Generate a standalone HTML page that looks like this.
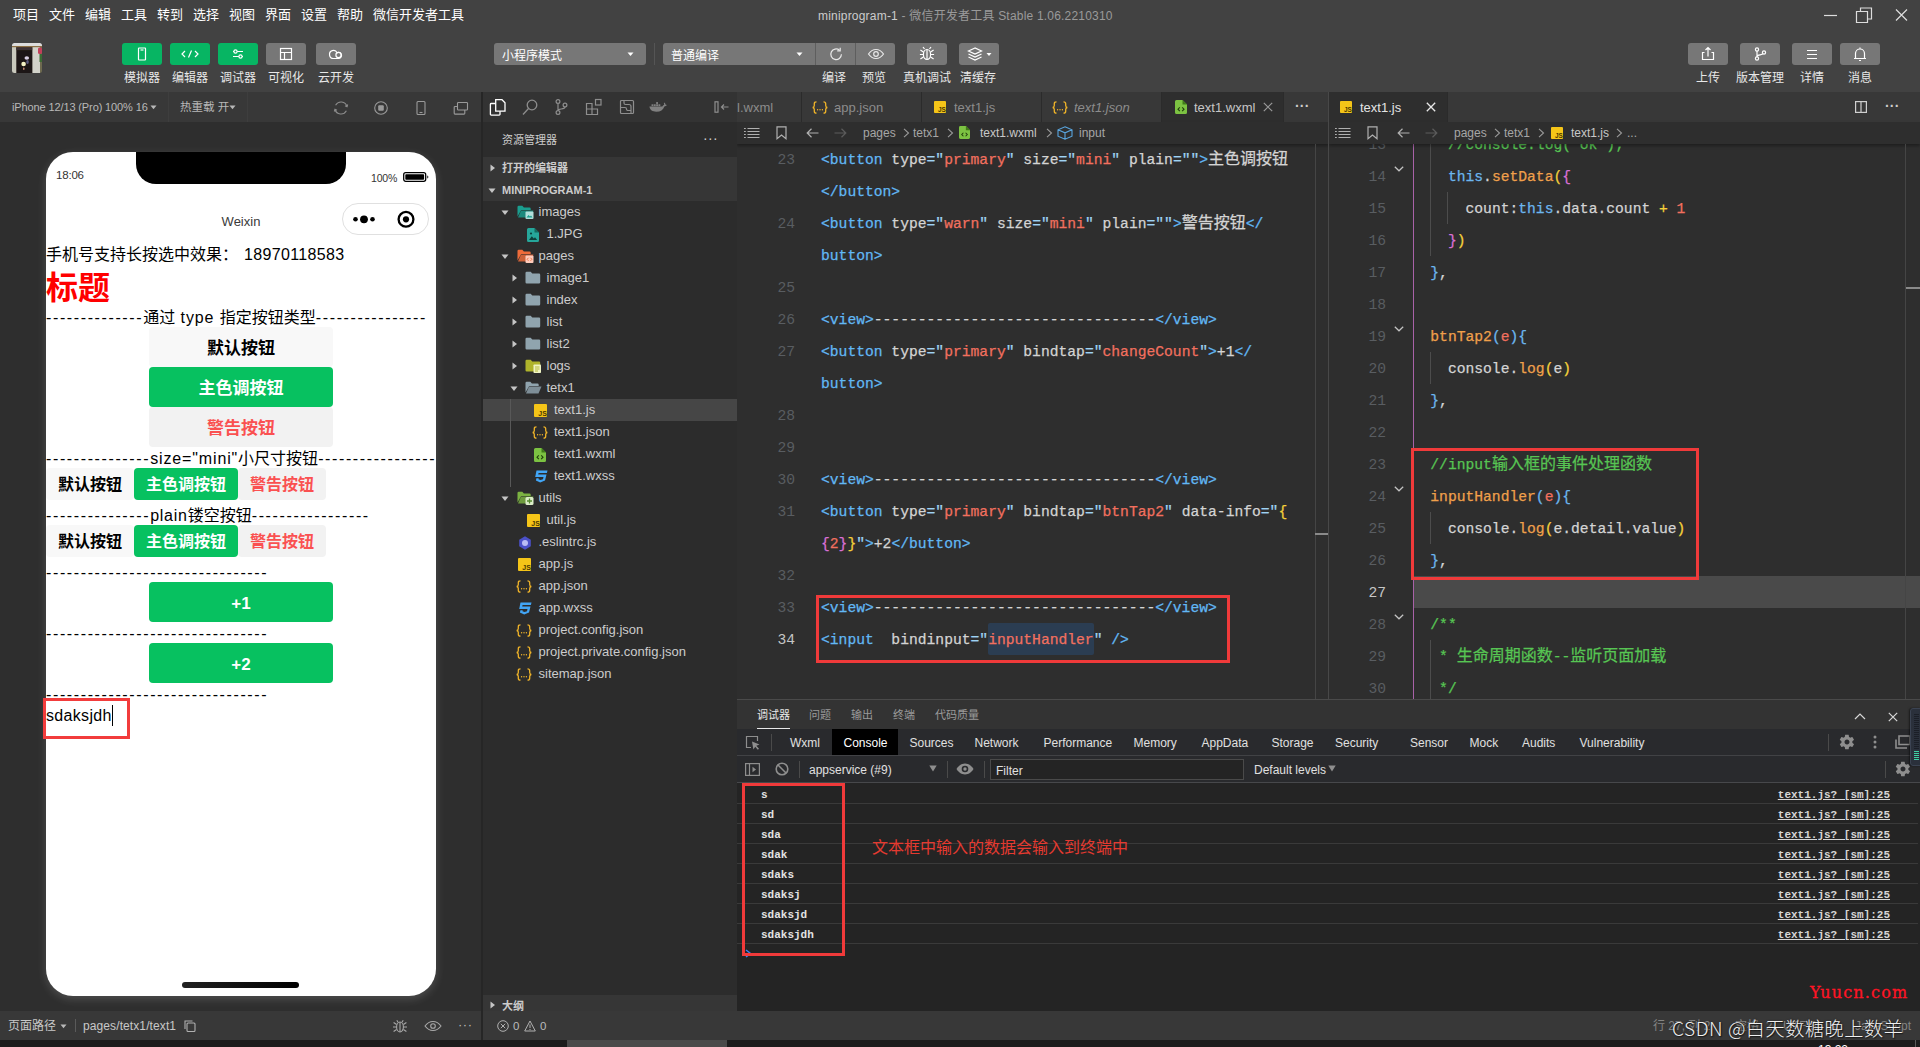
<!DOCTYPE html>
<html lang="zh-CN">
<head>
<meta charset="utf-8">
<title>miniprogram-1 - 微信开发者工具 Stable 1.06.2210310</title>
<style>
*{box-sizing:border-box;margin:0;padding:0}
html,body{width:1920px;height:1047px;overflow:hidden;background:#424242}
body{font-family:"Liberation Sans","Noto Sans CJK SC",sans-serif;font-size:12px;color:#ccc;position:relative}
.abs{position:absolute}
.t{position:absolute;white-space:nowrap;line-height:1}
svg{position:absolute;overflow:visible}
/* top */
#menubar{left:0;top:0;width:1920px;height:30px;background:#424242}
#menubar .t{top:8px;font-size:13px;color:#fff;line-height:14px}
#toolbar{left:0;top:30px;width:1920px;height:62px;background:#424242}
.tb{position:absolute;top:43px;height:22px;width:40px;border-radius:3px;background:#777}
.tb.g{background:#07b563}
.tl{position:absolute;top:72px;font-size:12px;color:#e8e8e8;line-height:13px;white-space:nowrap;transform:translateX(-50%)}
.sel{position:absolute;top:43px;height:22px;border-radius:3px;background:#777;color:#fff;font-size:12px;line-height:27px;padding-left:8px}
/* panels */
#sim{left:0;top:92px;width:481px;height:948px;background:#2e2e2e}
#simbar{left:0;top:92px;width:481px;height:30px;background:#383838}
#simfoot{left:0;top:1011px;width:481px;height:29px;background:#383838}
#side{left:483px;top:92px;width:254px;height:948px;background:#2c2c2c}
#actbar{left:483px;top:92px;width:254px;height:30px;background:#333}
#ed1{left:737px;top:92px;width:592px;height:608px;background:#2e2e2e;overflow:hidden}
#ed2{left:1329px;top:92px;width:591px;height:608px;background:#2e2e2e;overflow:hidden}
#dbg{left:737px;top:700px;width:1183px;height:311px;background:#242424;overflow:hidden}
#status{left:483px;top:1011px;width:1437px;height:29px;background:#383838}
#taskbar{left:0;top:1040px;width:1920px;height:7px;background:#1c1c1c;overflow:hidden}
.code{position:absolute;white-space:pre;margin-top:1px;-webkit-text-stroke:.25px;font-family:"Liberation Mono","Noto Sans CJK SC",monospace;font-size:14.67px;line-height:32px;height:32px;color:#d4d4d4}
.ln{position:absolute;margin-top:1px;font-family:"Liberation Mono",monospace;font-size:14.67px;line-height:32px;height:32px;color:#595d61;text-align:right;width:60px}
.tag{color:#62b8f5}.str{color:#f2705f}.att{color:#d4d4d4}.fn{color:#f0a04b}.cm{color:#57c553}.kw{color:#6cb6ef}.y{color:#f5d13a}.p{color:#da70d6}.b{color:#6cb6ef}.num{color:#f2705f}

/* phone */
#phone{left:46px;top:152px;width:390px;height:844px;background:#fff;border-radius:27px;overflow:hidden;color:#000;box-shadow:0 3px 10px rgba(255,255,255,.16)}
#phone .r{position:absolute;left:0;white-space:nowrap;font-size:16px;line-height:21px;height:21px;color:#000}
#phone .d{letter-spacing:1.615px}
.wb{position:absolute;left:103px;width:184px;height:40px;border-radius:4px;font-size:17px;font-weight:700;line-height:43px;text-align:center;background:#f2f2f2;color:#000}
.wm{position:absolute;height:32px;border-radius:4px;font-size:16px;font-weight:700;line-height:34px;text-align:center;background:#f2f2f2;color:#000}
.pri{background:#07c160;color:#fff}.warn{color:#fa5151}
.st{position:absolute;white-space:nowrap;color:#b8b8b8;font-size:11.5px;line-height:12px}

/* sidebar */
.tr{position:absolute;left:0;width:254px;height:22px}
.tr .n{position:absolute;top:0;font-size:13px;line-height:22px;color:#ccc;white-space:nowrap}
.hd{position:absolute;left:0;width:254px;height:22px;background:#363636}
.hd .n{position:absolute;left:19px;top:0;font-size:11px;font-weight:700;line-height:22px;color:#ccc;white-space:nowrap}

/* editors */
.tabbar{position:absolute;left:0;top:0;width:100%;height:30px;background:#383838}
.tab{position:absolute;top:0;height:30px;border-right:1px solid #2b2b2b;font-size:13px;line-height:31px;color:#8c8c8c;white-space:nowrap}
.tab.act{background:#2e2e2e;color:#e4e4e4}
.tab .n{position:absolute;top:0}
.bc{position:absolute;left:0;top:30px;width:100%;height:22px;background:#2e2e2e;box-shadow:0 2px 3px rgba(0,0,0,.35)}
.bc .n{position:absolute;top:0;font-size:12px;line-height:22px;color:#a6a6a6;white-space:nowrap}
.cj{font-size:16px}

/* debugger */
#dbg .n{position:absolute;white-space:nowrap}
.crow{position:absolute;left:0;width:1181px;height:20px;border-bottom:1px solid #3a3a3a;font-family:"Liberation Mono",monospace;font-size:11px;font-weight:700;line-height:20px;color:#e3e3e3}
.crow .m{position:absolute;left:24px;top:1px}
.crow .s{position:absolute;right:28px;top:1px;text-decoration:underline;color:#d6d6d6}
.q{color:#9fd3f2}
</style>
</head>
<body>
<div id="menubar" class="abs"><span class="t" style="left:13px">项目</span><span class="t" style="left:49px">文件</span><span class="t" style="left:85px">编辑</span><span class="t" style="left:121px">工具</span><span class="t" style="left:157px">转到</span><span class="t" style="left:193px">选择</span><span class="t" style="left:229px">视图</span><span class="t" style="left:265px">界面</span><span class="t" style="left:301px">设置</span><span class="t" style="left:337px">帮助</span><span class="t" style="left:373px">微信开发者工具</span><span class="t" style="left:818px;top:9px;font-size:12px;letter-spacing:.2px;color:#ccc">miniprogram-1<span style="color:#9a9a9a"> - 微信开发者工具 Stable 1.06.2210310</span></span><svg width="100" height="30" style="left:1820px;top:0" viewBox="0 0 100 30" fill="none" stroke="#ddd" stroke-width="1.2">
<path d="M4 15.5H17"/>
<path d="M36.500 11.500h11v11h-11z M40.500 11.500v-3.500h11v11h-4"/>
<path d="M76 9.5l11 11M87 9.5l-11 11"/></svg></div>
<div id="toolbar" class="abs"><svg width="30" height="30" style="left:12px;top:13px" viewBox="0 0 30 30"><defs><clipPath id="av"><rect width="30" height="30" rx="2.500"/></clipPath><filter id="bl"><feGaussianBlur stdDeviation=".55"/></filter></defs><g clip-path="url(#av)"><g filter="url(#bl)"><rect width="30" height="30" fill="#c9c9bd"/><rect x="4.300" y="4" width="16.300" height="27" fill="#1d1412"/><rect x="4.300" y="4.200" width="16.300" height="3" fill="#3c3236"/><rect x="20.600" y="3" width="7.500" height="28" fill="#d2d2ca"/><rect x="28" y="3" width="3" height="28" fill="#6e6a50"/><rect x="-1" y="-1" width="32" height="4" fill="#dcdcdc"/><rect x="-1" y="3" width="32" height="1.200" fill="#8c7044"/><rect x="26" y="4.500" width="4" height="6.500" rx="1.500" fill="#c2405a"/><rect x="27.500" y="11" width="3" height="8" fill="#3c6a34"/><ellipse cx="14.800" cy="15" rx="2.300" ry="1.800" fill="#d8d0e4"/><ellipse cx="11.600" cy="21" rx="2.300" ry="2.200" fill="#f4f2c4"/><ellipse cx="15.500" cy="19" rx="1.300" ry="2" fill="#5a5a80"/><ellipse cx="11.800" cy="25.800" rx=".8" ry="1.200" fill="#c8907c"/></g></g></svg><div class="tb g" style="left:122px;top:13px"><svg width="40" height="22" viewBox="0 0 40 22" fill="none" stroke="#fff" stroke-width="1.2"><rect x="16.5" y="5" width="7" height="12" rx="0.5"/><path d="M18.5 7h3"/></svg></div><div class="tb g" style="left:170px;top:13px"><svg width="40" height="22" viewBox="0 0 40 22" fill="none" stroke="#fff" stroke-width="1.2"><path d="M15 8l-3 3 3 3M25 8l3 3-3 3M21.5 7.5l-3 7"/></svg></div><div class="tb g" style="left:218px;top:13px"><svg width="40" height="22" viewBox="0 0 40 22" fill="none" stroke="#fff" stroke-width="1.2"><path d="M15 8.5h10M15 13.5h10"/><circle cx="17.5" cy="8.5" r="1.6" fill="#07b563"/><circle cx="22.5" cy="13.5" r="1.6" fill="#07b563"/></svg></div><div class="tb" style="left:266px;top:13px"><svg width="40" height="22" viewBox="0 0 40 22" fill="none" stroke="#fff" stroke-width="1.2"><rect x="14.5" y="5.5" width="11" height="11"/><path d="M14.5 9.5h11M18.5 9.5v7"/></svg></div><div class="tb" style="left:316px;top:13px"><svg width="40" height="22" viewBox="0 0 40 22" fill="none" stroke="#fff" stroke-width="1.2"><path d="M17.5 15.5a4 4 0 1 1 3.6-5.8a3 3 0 1 1 1.9 5.6z"/><circle cx="22.5" cy="12" r="2.6"/></svg></div><span class="tl" style="left:142px;top:42px">模拟器</span><span class="tl" style="left:190px;top:42px">编辑器</span><span class="tl" style="left:238px;top:42px">调试器</span><span class="tl" style="left:286px;top:42px">可视化</span><span class="tl" style="left:336px;top:42px">云开发</span><div class="sel" style="left:494px;top:13px;width:152px">小程序模式<svg width="8" height="5" style="left:133px;top:9px" viewBox="0 0 8 5"><path d="M0.5 0.5h6l-3 3.5z" fill="#fff"/></svg></div><div class="abs" style="left:654px;top:13px;width:1px;height:22px;background:#555"></div><div class="sel" style="left:663px;top:13px;width:232px">普通编译<svg width="8" height="5" style="left:133px;top:9px" viewBox="0 0 8 5"><path d="M0.5 0.5h6l-3 3.5z" fill="#fff"/></svg><div class="abs" style="left:152px;top:0;width:1px;height:22px;background:#5e5e5e"></div><div class="abs" style="left:192px;top:0;width:1px;height:22px;background:#5e5e5e"></div><svg width="40" height="22" style="left:153px;top:0" viewBox="0 0 40 22" fill="none" stroke="#e8e8e8" stroke-width="1.2"><path d="M23.5 7.2a5.3 5.3 0 1 0 1.9 4.1"/><path d="M24.2 4.8v3h-3" /></svg><svg width="40" height="22" style="left:193px;top:0" viewBox="0 0 40 22" fill="none" stroke="#e8e8e8" stroke-width="1.2"><path d="M12.5 11c2-3 4.5-4.5 7.5-4.5s5.500 1.500 7.500 4.500c-2 3-4.500 4.500-7.500 4.500s-5.500-1.500-7.500-4.500z"/><circle cx="20" cy="11" r="2.300"/></svg></div><div class="tb" style="left:907px;top:13px"><svg width="40" height="22" viewBox="0 0 40 22" fill="none" stroke="#fff" stroke-width="1.2"><ellipse cx="20" cy="11.5" rx="3.6" ry="5"/><path d="M20 6.5v10M16.400 9l-3-2M16.400 11.500h-3.500M16.400 14l-3 2M23.600 9l3-2M23.600 11.500h3.500M23.600 14l3 2M17.500 6l-1.500-2M22.500 6l1.500-2"/></svg></div><div class="tb" style="left:959px;top:13px"><svg width="40" height="22" viewBox="0 0 40 22" fill="none" stroke="#fff" stroke-width="1.200"><path d="M15 6.500l-6.500 3 6.500 3 6.500-3zM8.500 12.500l6.500 3 6.500-3M8.500 15.500l6.500 3 6.500-3" transform="translate(1,-1.500)"/><path d="M27.500 10h5l-2.500 3z" fill="#fff" stroke="none"/></svg></div><span class="tl" style="left:834px;top:42px">编译</span><span class="tl" style="left:874px;top:42px">预览</span><span class="tl" style="left:927px;top:42px">真机调试</span><span class="tl" style="left:978px;top:42px">清缓存</span><span class="tl" style="left:1708px;top:42px">上传</span><span class="tl" style="left:1760px;top:42px">版本管理</span><span class="tl" style="left:1812px;top:42px">详情</span><span class="tl" style="left:1860px;top:42px">消息</span><div class="tb" style="left:1688px;top:13px"><svg width="40" height="22" viewBox="0 0 40 22" fill="none" stroke="#fff" stroke-width="1.200"><path d="M16.500 9.500h-2v7h11v-7h-2M20 13.500v-9M17.500 7l2.500-2.500 2.500 2.500"/></svg></div><div class="tb" style="left:1740px;top:13px"><svg width="40" height="22" viewBox="0 0 40 22" fill="none" stroke="#fff" stroke-width="1.200"><circle cx="17" cy="6.500" r="1.600"/><circle cx="17" cy="15.500" r="1.600"/><circle cx="24" cy="9.500" r="1.600"/><path d="M17 8v6M17 13.500c0-2.500 5.500-1 5.800-2.800"/></svg></div><div class="tb" style="left:1792px;top:13px"><svg width="40" height="22" viewBox="0 0 40 22" fill="none" stroke="#fff" stroke-width="1.200"><path d="M15 7.500h10M15 11.500h10M15 15.500h10"/></svg></div><div class="tb" style="left:1840px;top:13px"><svg width="40" height="22" viewBox="0 0 40 22" fill="none" stroke="#fff" stroke-width="1.200"><path d="M15.500 15.500v-5a4.500 4.500 0 0 1 9 0v5zM14 15.500h12M20 6v-1.500M19 17.500h2"/></svg></div></div>
<div id="sim" class="abs"></div><div id="phone" class="abs"><div class="abs" style="left:90px;top:0;width:210px;height:32px;background:#000;border-radius:0 0 20px 20px"></div><span class="t" style="left:10px;top:18px;font-size:11.5px;letter-spacing:-.2px;color:#333">18:06</span><span class="t" style="left:325px;top:21px;font-size:10.5px;letter-spacing:-.2px;color:#333">100%</span><svg width="28" height="12" style="left:357px;top:19px" viewBox="0 0 28 12"><rect x="0.7" y="1.7" width="22" height="8.6" rx="2" fill="none" stroke="#000" stroke-width="1.3"/><rect x="2.300" y="3.200" width="18.800" height="5.600" rx="0.800" fill="#000"/><path d="M24.300 4.500v3a1.600 1.600 0 0 0 0-3z" fill="#000"/></svg><span class="t" style="left:195px;top:63px;font-size:13px;color:#3a3a3a;transform:translateX(-50%)">Weixin</span><div class="abs" style="left:296px;top:51px;width:87px;height:32px;border:1px solid #e0e0e0;border-radius:16px"></div><svg width="87" height="32" style="left:296px;top:51px" viewBox="0 0 87 32"><circle cx="13.500" cy="16.300" r="2.300" fill="#000"/><circle cx="22" cy="16.300" r="3.900" fill="#000"/><circle cx="30.500" cy="16.300" r="2.300" fill="#000"/><circle cx="64" cy="16.300" r="7.400" fill="none" stroke="#000" stroke-width="2.300"/><circle cx="64" cy="16.300" r="3.100" fill="#000"/></svg><div class="r" style="top:92px">手机号支持长按选中效果：<span style="margin-left:6px;letter-spacing:0.35px">18970118583</span></div><div class="r" style="top:115px;font-size:32px;line-height:42px;height:42px;font-weight:700;color:#f00">标题</div><div class="r" style="top:155px"><span class="d">--------------</span>通过<span style="letter-spacing:.9px"> type </span>指定按钮类型<span class="d">----------------</span></div><div class="wb" style="top:175px;background:#f8f8f8">默认按钮</div><div class="wb pri" style="top:215px">主色调按钮</div><div class="wb warn" style="top:255px">警告按钮</div><div class="r" style="top:296px"><span class="d">---------------</span><span style="letter-spacing:.86px">size="mini"</span>小尺寸按钮<span class="d">-----------------</span></div><div class="wm" style="left:0;top:316px;width:88px;background:#f8f8f8">默认按钮</div><div class="wm pri" style="left:88px;top:316px;width:104px">主色调按钮</div><div class="wm warn" style="left:192px;top:316px;width:88px">警告按钮</div><div class="wm" style="left:0;top:373px;width:88px;background:#f8f8f8">默认按钮</div><div class="wm pri" style="left:88px;top:373px;width:104px">主色调按钮</div><div class="wm warn" style="left:192px;top:373px;width:88px">警告按钮</div><div class="r" style="top:353px"><span class="d">---------------</span><span style="letter-spacing:.75px">plain</span>镂空按钮<span class="d">-----------------</span></div><div class="r d" style="top:410px">--------------------------------</div><div class="wb pri" style="top:430px">+1</div><div class="r d" style="top:471px">--------------------------------</div><div class="wb pri" style="top:491px">+2</div><div class="r d" style="top:532px">--------------------------------</div><div class="r" style="top:553px;letter-spacing:.33px">sdaksjdh</div><div class="abs" style="left:66px;top:553px;width:1px;height:21px;background:#000"></div><div class="abs" style="left:136px;top:830px;width:117px;height:6px;border-radius:3px;background:linear-gradient(90deg,#222,#000)"></div></div><div class="abs" style="left:43px;top:698px;width:87px;height:41px;border:3px solid #f23c3c"></div>
<div id="simbar" class="abs"><span class="st" style="left:12px;top:9px;font-size:11px;letter-spacing:-.12px">iPhone 12/13 (Pro) 100% 16</span><svg width="8" height="5" style="left:150px;top:13px" viewBox="0 0 8 5"><path d="M0.500 0.500h6l-3 3.800z" fill="#b8b8b8"/></svg><div class="abs" style="left:168px;top:0;width:1px;height:30px;background:#3e3e3e"></div><div class="abs" style="left:247px;top:0;width:1px;height:30px;background:#3e3e3e"></div><span class="st" style="left:180px;top:9px">热重载 开</span><svg width="8" height="5" style="left:229px;top:13px" viewBox="0 0 8 5"><path d="M0.500 0.500h6l-3 3.800z" fill="#b8b8b8"/></svg><svg width="16" height="16" style="left:333px;top:8px" viewBox="0 0 16 16" fill="none" stroke="#8c8c8c" stroke-width="1.100"><path d="M2.600 5.200a6.200 6.200 0 0 1 11.400 1.300M13.400 10.800a6.200 6.200 0 0 1-11.400-1.300"/><path d="M14.700 4.500l-.7 2.200-2-.9M1.300 11.500l.7-2.200 2 .9"/></svg><svg width="16" height="16" style="left:373px;top:8px" viewBox="0 0 16 16" fill="none" stroke="#9a9a9a" stroke-width="1.100"><circle cx="8" cy="8" r="6.300"/><rect x="5.200" y="5.200" width="5.600" height="5.600" rx="1" fill="#9a9a9a" stroke="none"/></svg><svg width="16" height="16" style="left:413px;top:8px" viewBox="0 0 16 16" fill="none" stroke="#9a9a9a" stroke-width="1.100"><rect x="4" y="1.500" width="8" height="13" rx="1"/><path d="M6.500 12.500h3"/></svg><svg width="16" height="16" style="left:453px;top:8px" viewBox="0 0 16 16" fill="none" stroke="#9a9a9a" stroke-width="1.100"><rect x="4.500" y="2.500" width="10" height="7.500" rx=".8"/><path d="M4.500 6.500h-2.500a.8.800 0 0 0-.8.800v6a.8.800 0 0 0 .8.800h9a.8.800 0 0 0 .8-.8v-3.300"/></svg></div>
<div id="simfoot" class="abs"><span class="st" style="left:8px;top:9px;font-size:12px;color:#c8c8c8">页面路径</span><svg width="8" height="5" style="left:60px;top:13px" viewBox="0 0 8 5"><path d="M0.500 0.500h6l-3 3.800z" fill="#b8b8b8"/></svg><div class="abs" style="left:75px;top:8px;width:1px;height:13px;background:#5a5a5a"></div><span class="st" style="left:83px;top:9px;font-size:12px;letter-spacing:.1px;color:#c8c8c8">pages/tetx1/text1</span><svg width="12" height="12" style="left:184px;top:9px" viewBox="0 0 12 12" fill="none" stroke="#b0b0b0" stroke-width="1.100"><rect x="3" y="3" width="8" height="8.500" rx="1"/><path d="M1 9v-8h7.500"/></svg><svg width="18" height="16" style="left:391px;top:7px" viewBox="0 0 18 16" fill="none" stroke="#a8a8a8" stroke-width="1.100"><ellipse cx="9" cy="9" rx="3.400" ry="5"/><path d="M9 4v10M5.600 6.500l-3-2M5.600 9h-3.600M5.600 11.500l-3 2M12.400 6.500l3-2M12.400 9h3.600M12.400 11.500l3 2M7 4.200l-1.200-2M11 4.200l1.200-2"/></svg><svg width="18" height="12" style="left:424px;top:9px" viewBox="0 0 18 12" fill="none" stroke="#a8a8a8" stroke-width="1.100"><path d="M1 6c2.200-3 4.800-4.500 8-4.500s5.800 1.500 8 4.500c-2.200 3-4.800 4.500-8 4.500s-5.800-1.500-8-4.500z"/><circle cx="9" cy="6" r="2.300"/></svg><span class="st" style="left:458px;top:8px;font-size:13px;color:#bbb;letter-spacing:.5px">···</span></div>
<div class="abs" style="left:481px;top:92px;width:2px;height:948px;background:#262626"></div><div id="side" class="abs"><span class="t" style="left:19px;top:43px;font-size:11px;color:#ccc">资源管理器</span><span class="t" style="left:220px;top:39px;font-size:14px;color:#ccc;letter-spacing:.4px">···</span><div class="hd" style="top:65px"><svg width="6" height="8" style="left:7px;top:7px" viewBox="0 0 6 8"><path d="M0.500 0.500v7l4.500-3.500z" fill="#c5c5c5"/></svg><span class="n">打开的编辑器</span></div><div class="hd" style="top:87px"><svg width="8" height="6" style="left:5px;top:9px" viewBox="0 0 8 6"><path d="M0.500 0.500h7l-3.500 4.500z" fill="#c5c5c5"/></svg><span class="n">MINIPROGRAM-1</span></div><div class="tr" style="top:109px;"><svg width="8" height="6" style="left:18px;top:9px" viewBox="0 0 8 6"><path d="M0.500 0.500h7l-3.500 4.500z" fill="#c5c5c5"/></svg><svg width="17" height="14" style="left:34px;top:4px" viewBox="0 0 17 14"><path d="M0.500 2a1.200 1.200 0 0 1 1.200-1.200h3.600l1.600 1.700h5.600a1.200 1.200 0 0 1 1.200 1.200v1.300h-9.500l-3.700 6.500z" fill="#1a9e8f"/><path d="M4 5.400h12.500l-3 7.200h-12.500z" fill="#1a9e8f" opacity=".82"/><rect x="8.500" y="6.500" width="8" height="7.500" rx="1" fill="#b2dfdb"/><path d="M9.500 12.500l2-2.500 1.500 1.500 1-1 1.500 2z" fill="#1a9e8f"/></svg><span class="n" style="left:55.5px">images</span></div><div class="tr" style="top:131px;"><svg width="12" height="14" style="left:44px;top:4.5px" viewBox="0 0 12 14"><path d="M1.500 0h6l4.500 4.500v8a1.500 1.500 0 0 1-1.500 1.500h-9a1.500 1.500 0 0 1-1.500-1.500v-11a1.500 1.500 0 0 1 1.500-1.500z" fill="#26a69a"/><path d="M7.500 0v4.500h4.500z" fill="#14695f"/><path d="M2 12l2.800-3.800 2 2.300 1.200-1.300 2.200 2.800z" fill="#0d3f3a"/><circle cx="4" cy="5.500" r="1.100" fill="#0d3f3a"/></svg><span class="n" style="left:63.5px">1.JPG</span></div><div class="tr" style="top:153px;"><svg width="8" height="6" style="left:18px;top:9px" viewBox="0 0 8 6"><path d="M0.500 0.500h7l-3.500 4.500z" fill="#c5c5c5"/></svg><svg width="17" height="14" style="left:34px;top:4px" viewBox="0 0 17 14"><path d="M0.500 2a1.200 1.200 0 0 1 1.200-1.200h3.600l1.600 1.700h5.600a1.200 1.200 0 0 1 1.200 1.200v1.300h-9.500l-3.700 6.500z" fill="#ef6c3a"/><path d="M4 5.400h12.500l-3 7.200h-12.500z" fill="#ef6c3a" opacity=".82"/><rect x="8.500" y="6.500" width="8" height="7.500" rx="1" fill="#ffccbc"/><path d="M11.500 8.800l-1.400 1.500 1.400 1.500M13.500 8.800l1.400 1.500-1.400 1.500" fill="none" stroke="#ef6c3a" stroke-width=".9"/></svg><span class="n" style="left:55.5px">pages</span></div><div class="tr" style="top:175px;"><svg width="6" height="8" style="left:28.5px;top:7px" viewBox="0 0 6 8"><path d="M0.500 0.500v7l4.500-3.500z" fill="#c5c5c5"/></svg><svg width="17" height="14" style="left:42px;top:4px" viewBox="0 0 17 14"><path d="M0.500 2a1.200 1.200 0 0 1 1.200-1.200h4l1.600 1.700h6.700a1.200 1.200 0 0 1 1.200 1.200v7.600a1.200 1.200 0 0 1-1.200 1.200h-12.300a1.200 1.200 0 0 1-1.200-1.200z" fill="#90a4ae"/></svg><span class="n" style="left:63.5px">image1</span></div><div class="tr" style="top:197px;"><svg width="6" height="8" style="left:28.5px;top:7px" viewBox="0 0 6 8"><path d="M0.500 0.500v7l4.500-3.500z" fill="#c5c5c5"/></svg><svg width="17" height="14" style="left:42px;top:4px" viewBox="0 0 17 14"><path d="M0.500 2a1.200 1.200 0 0 1 1.200-1.200h4l1.600 1.700h6.700a1.200 1.200 0 0 1 1.200 1.200v7.600a1.200 1.200 0 0 1-1.200 1.200h-12.300a1.200 1.200 0 0 1-1.200-1.200z" fill="#90a4ae"/></svg><span class="n" style="left:63.5px">index</span></div><div class="tr" style="top:219px;"><svg width="6" height="8" style="left:28.5px;top:7px" viewBox="0 0 6 8"><path d="M0.500 0.500v7l4.500-3.500z" fill="#c5c5c5"/></svg><svg width="17" height="14" style="left:42px;top:4px" viewBox="0 0 17 14"><path d="M0.500 2a1.200 1.200 0 0 1 1.200-1.200h4l1.600 1.700h6.700a1.200 1.200 0 0 1 1.200 1.200v7.600a1.200 1.200 0 0 1-1.200 1.200h-12.300a1.200 1.200 0 0 1-1.200-1.200z" fill="#90a4ae"/></svg><span class="n" style="left:63.5px">list</span></div><div class="tr" style="top:241px;"><svg width="6" height="8" style="left:28.5px;top:7px" viewBox="0 0 6 8"><path d="M0.500 0.500v7l4.500-3.500z" fill="#c5c5c5"/></svg><svg width="17" height="14" style="left:42px;top:4px" viewBox="0 0 17 14"><path d="M0.500 2a1.200 1.200 0 0 1 1.200-1.200h4l1.600 1.700h6.700a1.200 1.200 0 0 1 1.200 1.200v7.600a1.200 1.200 0 0 1-1.200 1.200h-12.300a1.200 1.200 0 0 1-1.200-1.200z" fill="#90a4ae"/></svg><span class="n" style="left:63.5px">list2</span></div><div class="tr" style="top:263px;"><svg width="6" height="8" style="left:28.5px;top:7px" viewBox="0 0 6 8"><path d="M0.500 0.500v7l4.500-3.500z" fill="#c5c5c5"/></svg><svg width="17" height="14" style="left:42px;top:4px" viewBox="0 0 17 14"><path d="M0.500 2a1.200 1.200 0 0 1 1.200-1.200h4l1.600 1.700h6.700a1.200 1.200 0 0 1 1.200 1.200v7.600a1.200 1.200 0 0 1-1.200 1.200h-12.300a1.200 1.200 0 0 1-1.200-1.200z" fill="#afb42b"/><rect x="8.500" y="5.500" width="7.500" height="8.500" rx=".8" fill="#f0f4c3"/><path d="M10 8h4.500M10 10h4.500M10 12h3" stroke="#afb42b" stroke-width=".9"/></svg><span class="n" style="left:63.5px">logs</span></div><div class="tr" style="top:285px;"><svg width="8" height="6" style="left:26.5px;top:9px" viewBox="0 0 8 6"><path d="M0.500 0.500h7l-3.500 4.500z" fill="#c5c5c5"/></svg><svg width="17" height="14" style="left:42px;top:4px" viewBox="0 0 17 14"><path d="M0.500 2a1.200 1.200 0 0 1 1.200-1.200h3.600l1.600 1.700h5.600a1.200 1.200 0 0 1 1.200 1.200v1.300h-9.500l-3.700 6.500z" fill="#90a4ae"/><path d="M4 5.400h12.500l-3 7.200h-12.500z" fill="#90a4ae" opacity=".82"/></svg><span class="n" style="left:63.5px">tetx1</span></div><div class="tr" style="top:307px;background:#464646;"><svg width="13" height="13" style="left:51px;top:4.5px" viewBox="0 0 13 13"><rect width="13" height="13" rx="1" fill="#f5c518"/><text x="4.300" y="11.500" font-family="Liberation Sans,sans-serif" font-size="7" font-weight="700" fill="#4a3800">JS</text></svg><span class="n" style="left:71px">text1.js</span></div><div class="tr" style="top:329px;"><svg width="16" height="13" style="left:49px;top:5px" viewBox="0 0 16 13" fill="none" stroke="#f0b429" stroke-width="1.300"><path d="M4.500 0.800c-1.800 0-2.200 0.600-2.200 2v1.700c0 1.200-0.500 1.800-1.600 2 1.100 0.200 1.600 0.800 1.600 2v1.700c0 1.400 0.400 2 2.200 2M11.500 0.800c1.800 0 2.200 0.600 2.200 2v1.700c0 1.200 0.500 1.800 1.600 2-1.100 0.200-1.600 0.800-1.600 2v1.700c0 1.400-0.400 2-2.200 2"/><path d="M5.600 8.800h0.010M8 8.800h0.010M10.400 8.800h0.010" stroke-linecap="round" stroke-width="1.400"/></svg><span class="n" style="left:71px">text1.json</span></div><div class="tr" style="top:351px;"><svg width="12" height="14" style="left:51px;top:4.5px" viewBox="0 0 12 14"><path d="M1.500 0h6l4.500 4.500v8a1.500 1.500 0 0 1-1.500 1.500h-9a1.500 1.500 0 0 1-1.500-1.500v-11a1.500 1.500 0 0 1 1.500-1.500z" fill="#7cc242"/><path d="M7.500 0v4.500h4.500z" fill="#3f7a18"/><path d="M4.800 7.300l-1.800 1.900 1.800 1.900M7.200 7.300l1.800 1.900-1.800 1.900" fill="none" stroke="#1f3d0a" stroke-width="1.100"/></svg><span class="n" style="left:71px">text1.wxml</span></div><div class="tr" style="top:373px;"><svg width="14" height="13" style="left:51px;top:4.5px" viewBox="0 0 14 13"><path d="M2.500 0.500h11l-0.600 2.400h-8.300l-0.400 1.700h8.300l-1.500 6-4.800 1.800-4.300-1.800 0.500-2.400h2.300l-0.200 1 2 0.800 2.500-0.800 0.500-2.200h-8.300z" fill="#42a5f5"/></svg><span class="n" style="left:71px">text1.wxss</span></div><div class="tr" style="top:395px;"><svg width="8" height="6" style="left:18px;top:9px" viewBox="0 0 8 6"><path d="M0.500 0.500h7l-3.500 4.500z" fill="#c5c5c5"/></svg><svg width="17" height="14" style="left:34px;top:4px" viewBox="0 0 17 14"><path d="M0.500 2a1.200 1.200 0 0 1 1.200-1.200h3.600l1.600 1.700h5.600a1.200 1.200 0 0 1 1.200 1.200v1.300h-9.500l-3.700 6.500z" fill="#7cb342"/><path d="M4 5.400h12.500l-3 7.200h-12.500z" fill="#7cb342" opacity=".82"/><rect x="8.500" y="6" width="8" height="8" rx="1.500" fill="#dcedc8"/><path d="M12.500 7.500v5M10 10h5" stroke="#558b2f" stroke-width="1.300"/></svg><span class="n" style="left:55.5px">utils</span></div><div class="tr" style="top:417px;"><svg width="13" height="13" style="left:44px;top:4.5px" viewBox="0 0 13 13"><rect width="13" height="13" rx="1" fill="#f5c518"/><text x="4.300" y="11.500" font-family="Liberation Sans,sans-serif" font-size="7" font-weight="700" fill="#4a3800">JS</text></svg><span class="n" style="left:63.5px">util.js</span></div><div class="tr" style="top:439px;"><svg width="14" height="14" style="left:35px;top:4.5px" viewBox="0 0 14 14"><path d="M7 0.300l5.800 3.350v6.700l-5.800 3.350-5.800-3.350v-6.700z" fill="#4b50c8"/><circle cx="7" cy="7" r="3" fill="#b9bcf5"/></svg><span class="n" style="left:55.5px">.eslintrc.js</span></div><div class="tr" style="top:461px;"><svg width="13" height="13" style="left:35px;top:4.5px" viewBox="0 0 13 13"><rect width="13" height="13" rx="1" fill="#f5c518"/><text x="4.300" y="11.500" font-family="Liberation Sans,sans-serif" font-size="7" font-weight="700" fill="#4a3800">JS</text></svg><span class="n" style="left:55.5px">app.js</span></div><div class="tr" style="top:483px;"><svg width="16" height="13" style="left:33px;top:5px" viewBox="0 0 16 13" fill="none" stroke="#f0b429" stroke-width="1.300"><path d="M4.500 0.800c-1.800 0-2.200 0.600-2.200 2v1.700c0 1.200-0.500 1.800-1.600 2 1.100 0.200 1.600 0.800 1.600 2v1.700c0 1.400 0.400 2 2.200 2M11.500 0.800c1.800 0 2.200 0.600 2.200 2v1.700c0 1.200 0.500 1.800 1.600 2-1.100 0.200-1.600 0.800-1.600 2v1.700c0 1.400-0.400 2-2.200 2"/><path d="M5.600 8.800h0.010M8 8.800h0.010M10.400 8.800h0.010" stroke-linecap="round" stroke-width="1.400"/></svg><span class="n" style="left:55.5px">app.json</span></div><div class="tr" style="top:505px;"><svg width="14" height="13" style="left:35px;top:4.5px" viewBox="0 0 14 13"><path d="M2.500 0.500h11l-0.600 2.400h-8.300l-0.400 1.700h8.300l-1.500 6-4.800 1.800-4.300-1.800 0.500-2.400h2.300l-0.200 1 2 0.800 2.500-0.800 0.500-2.200h-8.300z" fill="#42a5f5"/></svg><span class="n" style="left:55.5px">app.wxss</span></div><div class="tr" style="top:527px;"><svg width="16" height="13" style="left:33px;top:5px" viewBox="0 0 16 13" fill="none" stroke="#f0b429" stroke-width="1.300"><path d="M4.500 0.800c-1.800 0-2.200 0.600-2.200 2v1.700c0 1.200-0.500 1.800-1.600 2 1.100 0.200 1.600 0.800 1.600 2v1.700c0 1.400 0.400 2 2.200 2M11.500 0.800c1.800 0 2.200 0.600 2.200 2v1.700c0 1.200 0.500 1.800 1.600 2-1.100 0.200-1.600 0.800-1.600 2v1.700c0 1.400-0.400 2-2.200 2"/><path d="M5.600 8.800h0.010M8 8.800h0.010M10.400 8.800h0.010" stroke-linecap="round" stroke-width="1.400"/></svg><span class="n" style="left:55.5px">project.config.json</span></div><div class="tr" style="top:549px;"><svg width="16" height="13" style="left:33px;top:5px" viewBox="0 0 16 13" fill="none" stroke="#f0b429" stroke-width="1.300"><path d="M4.500 0.800c-1.800 0-2.200 0.600-2.200 2v1.700c0 1.200-0.500 1.800-1.600 2 1.100 0.200 1.600 0.800 1.600 2v1.700c0 1.400 0.400 2 2.200 2M11.500 0.800c1.800 0 2.200 0.600 2.200 2v1.700c0 1.200 0.500 1.800 1.600 2-1.100 0.200-1.600 0.800-1.600 2v1.700c0 1.400-0.400 2-2.200 2"/><path d="M5.600 8.800h0.010M8 8.800h0.010M10.400 8.800h0.010" stroke-linecap="round" stroke-width="1.400"/></svg><span class="n" style="left:55.5px">project.private.config.json</span></div><div class="tr" style="top:571px;"><svg width="16" height="13" style="left:33px;top:5px" viewBox="0 0 16 13" fill="none" stroke="#f0b429" stroke-width="1.300"><path d="M4.500 0.800c-1.800 0-2.200 0.600-2.200 2v1.700c0 1.200-0.500 1.800-1.600 2 1.100 0.200 1.600 0.800 1.600 2v1.700c0 1.400 0.400 2 2.200 2M11.500 0.800c1.800 0 2.200 0.600 2.200 2v1.700c0 1.200 0.500 1.800 1.600 2-1.100 0.200-1.600 0.800-1.600 2v1.700c0 1.400-0.400 2-2.200 2"/><path d="M5.600 8.800h0.010M8 8.800h0.010M10.400 8.800h0.010" stroke-linecap="round" stroke-width="1.400"/></svg><span class="n" style="left:55.5px">sitemap.json</span></div><div class="abs" style="left:27px;top:307px;width:1px;height:88px;background:#585858"></div><div class="hd" style="top:903px;height:16px"><svg width="6" height="8" style="left:7px;top:6px" viewBox="0 0 6 8"><path d="M0.500 0.500v7l4.500-3.500z" fill="#c5c5c5"/></svg><span class="n" style="line-height:22px">大纲</span></div></div>
<div id="actbar" class="abs"><svg width="18" height="18" style="left:6px;top:6px" viewBox="0 0 18 18" fill="none" stroke="#fff" stroke-width="1.300"><path d="M6.700 1.700h6.300l3 3v8.500h-9.300z"/><path d="M6.700 5.500h-4.500a.8.800 0 0 0-.8.800v10a.8.800 0 0 0 .8.800h8a.8.800 0 0 0 .8-.8v-3"/></svg><svg width="18" height="18" style="left:38px;top:6px" viewBox="0 0 18 18" fill="none" stroke="#8e8e8e" stroke-width="1.300"><circle cx="11" cy="7" r="4.800"/><path d="M7.500 10.500l-5.500 6"/></svg><svg width="18" height="18" style="left:69px;top:6px" viewBox="0 0 18 18" fill="none" stroke="#8e8e8e" stroke-width="1.200"><circle cx="6" cy="3.500" r="1.900"/><circle cx="6" cy="14.500" r="1.900"/><circle cx="13" cy="7" r="1.900"/><path d="M6 5.400v7.200M13 8.900c0 2.800-7 1.500-7 3.700"/></svg><svg width="18" height="18" style="left:102px;top:6px" viewBox="0 0 18 18" fill="none" stroke="#8e8e8e" stroke-width="1.200"><path d="M1.500 5.500h5.500v11h-5.500zM7 11h5.500v5.500h-5.500M1.500 11h5.500"/><rect x="10.500" y="1.500" width="5.500" height="5.500"/></svg><svg width="18" height="18" style="left:135px;top:6px" viewBox="0 0 18 18" fill="none" stroke="#8e8e8e" stroke-width="1.200"><rect x="2.500" y="2.500" width="13" height="13" rx="1"/><path d="M6 2.500v2.500a1.500 1.500 0 0 0 1.500 1.500h3.500a2 2 0 0 1 2 2v7M2.500 9.500h4.500a1.500 1.500 0 0 1 1.500 1.500v0a1.500 1.500 0 0 0 1.500 1.500h3"/></svg><svg width="17" height="12" style="left:166px;top:9px" viewBox="0 0 20 14" fill="#808080"><path d="M0.500 6.500h15.200c0.300-1.200 1.300-2 2.300-2-0.600-0.800-0.600-2 0-2.800 1 0.600 1.400 1.600 1.300 2.400 0.700 0 1.200 0.200 1.600 0.600-0.600 1.200-1.800 1.600-2.800 1.600-1.500 4-4.500 6.200-9.500 6.200-4.500 0-7.500-1.800-8.100-6z"/><rect x="3" y="3.800" width="2.200" height="2.200"/><rect x="5.700" y="3.800" width="2.200" height="2.200"/><rect x="8.400" y="3.800" width="2.200" height="2.200"/><rect x="8.400" y="1.200" width="2.200" height="2.200"/><rect x="11.100" y="3.800" width="2.200" height="2.200"/></svg><svg width="16" height="12" style="left:231px;top:9px" viewBox="0 0 16 12" fill="none" stroke="#8e8e8e" stroke-width="1.200"><rect x="1" y="0.800" width="3" height="10.400"/><path d="M14.500 6h-7M10 3.500l-2.500 2.500 2.500 2.500"/></svg></div>
<div id="ed1" class="abs"><div class="tabbar"><div class="tab" style="left:0;width:65px"><span class="n" style="left:0">l.wxml</span></div><div class="tab" style="left:65px;width:120px"><svg width="16" height="13" style="left:10px;top:9px" viewBox="0 0 16 13" fill="none" stroke="#f0b429" stroke-width="1.300"><path d="M4.500 0.800c-1.800 0-2.200 0.600-2.200 2v1.700c0 1.200-0.500 1.800-1.600 2 1.100 0.200 1.600 0.800 1.600 2v1.700c0 1.400 0.400 2 2.200 2M11.500 0.800c1.800 0 2.200 0.600 2.200 2v1.700c0 1.200 0.500 1.800 1.600 2-1.100 0.200-1.600 0.800-1.600 2v1.700c0 1.400-0.400 2-2.200 2"/><path d="M5.600 8.800h0.010M8 8.800h0.010M10.400 8.800h0.010" stroke-linecap="round" stroke-width="1.400"/></svg><span class="n" style="left:32px">app.json</span></div><div class="tab" style="left:185px;width:120px"><svg width="12" height="12" style="left:12px;top:9px" viewBox="0 0 13 13"><rect width="13" height="13" rx="1" fill="#f5c518"/><text x="4.300" y="11.500" font-family="Liberation Sans,sans-serif" font-size="7" font-weight="700" fill="#4a3800">JS</text></svg><span class="n" style="left:32px">text1.js</span></div><div class="tab" style="left:305px;width:120px"><svg width="16" height="13" style="left:10px;top:9px" viewBox="0 0 16 13" fill="none" stroke="#f0b429" stroke-width="1.300"><path d="M4.500 0.800c-1.800 0-2.200 0.600-2.200 2v1.700c0 1.200-0.500 1.800-1.600 2 1.100 0.200 1.600 0.800 1.600 2v1.700c0 1.400 0.400 2 2.200 2M11.500 0.800c1.800 0 2.200 0.600 2.200 2v1.700c0 1.200 0.500 1.800 1.600 2-1.100 0.200-1.600 0.800-1.600 2v1.700c0 1.400-0.400 2-2.200 2"/><path d="M5.600 8.800h0.010M8 8.800h0.010M10.400 8.800h0.010" stroke-linecap="round" stroke-width="1.400"/></svg><span class="n" style="left:32px;font-style:italic">text1.json</span></div><div class="tab act" style="left:425px;width:122px;color:#c6c6c6"><svg width="12" height="14" style="left:13px;top:8px" viewBox="0 0 12 14"><path d="M1.500 0h6l4.500 4.500v8a1.500 1.500 0 0 1-1.500 1.500h-9a1.500 1.500 0 0 1-1.500-1.500v-11a1.500 1.500 0 0 1 1.500-1.500z" fill="#7cc242"/><path d="M7.500 0v4.500h4.500z" fill="#3f7a18"/><path d="M4.800 7.300l-1.800 1.900 1.800 1.900M7.200 7.300l1.800 1.900-1.800 1.900" fill="none" stroke="#1f3d0a" stroke-width="1.100"/></svg><span class="n" style="left:32px">text1.wxml</span><svg width="10" height="10" style="left:101px;top:10px" viewBox="0 0 10 10" stroke="#9a9a9a" stroke-width="1.200"><path d="M0.800 0.800l8.400 8.400M9.200 0.800l-8.400 8.400"/></svg></div><span class="t" style="left:558px;top:7px;font-size:14px;font-weight:700;color:#ccc;letter-spacing:.2px">···</span></div><div class="bc"><svg width="16" height="12" style="left:7px;top:5px" viewBox="0 0 16 12" fill="none" stroke="#b0b0b0" stroke-width="1.100"><path d="M3.500 1.500h12M3.500 4.500h12M3.500 7.500h12M3.500 10.500h12M0 1.500h1.800M0 4.500h1.800M0 7.500h1.800M0 10.500h1.800"/></svg><svg width="11" height="14" style="left:39px;top:4px" viewBox="0 0 11 14" fill="none" stroke="#b0b0b0" stroke-width="1.200"><path d="M1 0.800h9v12l-4.500-3.800-4.500 3.800z"/></svg><svg width="13" height="10" style="left:69px;top:6px" viewBox="0 0 13 10" fill="none" stroke="#b0b0b0" stroke-width="1.200"><path d="M12.500 5h-11.500M5.500 0.800l-4.300 4.200 4.300 4.200"/></svg><svg width="13" height="10" style="left:97px;top:6px" viewBox="0 0 13 10" fill="none" stroke="#5c5c5c" stroke-width="1.200"><path d="M0.500 5h11.500M7.500 0.800l4.300 4.200-4.300 4.200"/></svg><span class="n" style="left:126px">pages</span><svg width="7" height="10" style="left:166px;top:6px" viewBox="0 0 7 10" fill="none" stroke="#9a9a9a" stroke-width="1.100"><path d="M1 0.800l4.500 4.200-4.500 4.200"/></svg><span class="n" style="left:176px">tetx1</span><svg width="7" height="10" style="left:210px;top:6px" viewBox="0 0 7 10" fill="none" stroke="#9a9a9a" stroke-width="1.100"><path d="M1 0.800l4.500 4.200-4.500 4.200"/></svg><svg width="11" height="13" style="left:222px;top:4px" viewBox="0 0 12 14"><path d="M1.500 0h6l4.500 4.500v8a1.500 1.500 0 0 1-1.500 1.500h-9a1.500 1.500 0 0 1-1.500-1.500v-11a1.500 1.500 0 0 1 1.500-1.500z" fill="#7cc242"/><path d="M7.500 0v4.500h4.500z" fill="#3f7a18"/><path d="M4.800 7.300l-1.800 1.900 1.800 1.900M7.200 7.300l1.800 1.900-1.800 1.900" fill="none" stroke="#1f3d0a" stroke-width="1.100"/></svg><span class="n" style="left:243px;color:#c8c8c8">text1.wxml</span><svg width="7" height="10" style="left:309px;top:6px" viewBox="0 0 7 10" fill="none" stroke="#9a9a9a" stroke-width="1.100"><path d="M1 0.800l4.500 4.200-4.500 4.200"/></svg><svg width="16" height="14" style="left:320px;top:4px" viewBox="0 0 16 14" fill="none" stroke="#5aa6e0" stroke-width="1.100"><path d="M8 0.800l7 3v6.400l-7 3-7-3v-6.400zM1 3.800l7 3 7-3M8 6.800v6.400"/></svg><span class="n" style="left:342px">input</span></div><div class="abs" style="left:251px;top:531px;width:106px;height:32px;background:#2b3d52;border-radius:2px"></div><div class="ln" style="left:-2px;top:51px;">23</div><div class="code" style="left:84px;top:51px"><span class="tag">&lt;button</span> type<span class="q">="</span><span class="str">primary</span><span class="q">"</span> size<span class="q">="</span><span class="str">mini</span><span class="q">"</span> plain<span class="q">=""</span><span class="tag">&gt;</span><span class="cj">主色调按钮</span></div><div class="code" style="left:84px;top:83px"><span class="tag">&lt;/button&gt;</span></div><div class="ln" style="left:-2px;top:115px;">24</div><div class="code" style="left:84px;top:115px"><span class="tag">&lt;button</span> type<span class="q">="</span><span class="str">warn</span><span class="q">"</span> size<span class="q">="</span><span class="str">mini</span><span class="q">"</span> plain<span class="q">=""</span><span class="tag">&gt;</span><span class="cj">警告按钮</span><span class="tag">&lt;/</span></div><div class="code" style="left:84px;top:147px"><span class="tag">button&gt;</span></div><div class="ln" style="left:-2px;top:179px;">25</div><div class="ln" style="left:-2px;top:211px;">26</div><div class="code" style="left:84px;top:211px"><span class="tag">&lt;view&gt;</span>--------------------------------<span class="tag">&lt;/view&gt;</span></div><div class="ln" style="left:-2px;top:243px;">27</div><div class="code" style="left:84px;top:243px"><span class="tag">&lt;button</span> type<span class="q">="</span><span class="str">primary</span><span class="q">"</span> bindtap<span class="q">="</span><span class="str">changeCount</span><span class="q">"</span><span class="tag">&gt;</span>+1<span class="tag">&lt;/</span></div><div class="code" style="left:84px;top:275px"><span class="tag">button&gt;</span></div><div class="ln" style="left:-2px;top:307px;">28</div><div class="ln" style="left:-2px;top:339px;">29</div><div class="ln" style="left:-2px;top:371px;">30</div><div class="code" style="left:84px;top:371px"><span class="tag">&lt;view&gt;</span>--------------------------------<span class="tag">&lt;/view&gt;</span></div><div class="ln" style="left:-2px;top:403px;">31</div><div class="code" style="left:84px;top:403px"><span class="tag">&lt;button</span> type<span class="q">="</span><span class="str">primary</span><span class="q">"</span> bindtap<span class="q">="</span><span class="str">btnTap2</span><span class="q">"</span> data-info<span class="q">="</span><span class="y">{</span></div><div class="code" style="left:84px;top:435px"><span class="p">{</span><span class="num">2</span><span class="p">}</span><span class="y">}</span><span class="q">"</span><span class="tag">&gt;</span>+2<span class="tag">&lt;/button&gt;</span></div><div class="ln" style="left:-2px;top:467px;">32</div><div class="ln" style="left:-2px;top:499px;">33</div><div class="code" style="left:84px;top:499px"><span class="tag">&lt;view&gt;</span>--------------------------------<span class="tag">&lt;/view&gt;</span></div><div class="ln" style="left:-2px;top:531px;color:#c6c6c6">34</div><div class="code" style="left:84px;top:531px"><span class="tag">&lt;input</span>  bindinput<span class="q">="</span><span class="str">inputHandler</span><span class="q">"</span> <span class="tag">/&gt;</span></div><div class="abs" style="left:578px;top:52px;width:1px;height:556px;background:#454545"></div><div class="abs" style="left:591px;top:0;width:1px;height:608px;background:#484848"></div><div class="abs" style="left:578px;top:441px;width:13px;height:2px;background:#8a8a8a"></div><div class="abs" style="left:79px;top:503px;width:414px;height:68px;border:3px solid #f03a3a"></div></div>
<div id="ed2" class="abs"><div class="abs" style="left:0;top:0;width:591px;height:608px;overflow:hidden"><div class="abs" style="left:84px;top:484px;width:507px;height:32px;background:#4a4a4a"></div><div class="abs" style="left:84px;top:52px;width:1px;height:556px;background:#a862a8"></div><div class="abs" style="left:101px;top:52px;width:1px;height:112px;background:#4c4c4c"></div><div class="abs" style="left:118px;top:100px;width:1px;height:32px;background:#4c4c4c"></div><div class="abs" style="left:101px;top:260px;width:1px;height:32px;background:#4c4c4c"></div><div class="abs" style="left:101px;top:420px;width:1px;height:32px;background:#4c4c4c"></div><div class="abs" style="left:101px;top:548px;width:1px;height:60px;background:#4c4c4c"></div><div class="ln" style="left:-3px;top:36px;">13</div><div class="code" style="left:118.9px;top:36px"><span class="cm">//console.log('ok');</span></div><div class="ln" style="left:-3px;top:68px;">14</div><svg width="10" height="6" style="left:65px;top:74px" viewBox="0 0 10 6" fill="none" stroke="#c5c5c5" stroke-width="1.200"><path d="M0.800 0.800l4.200 4 4.200-4"/></svg><div class="code" style="left:118.9px;top:68px"><span class="kw">this</span>.<span class="fn">setData</span><span class="y">(</span><span class="p">{</span></div><div class="ln" style="left:-3px;top:100px;">15</div><div class="code" style="left:136.5px;top:100px">count:<span class="kw">this</span>.data.count <span class="y">+</span> <span class="num">1</span></div><div class="ln" style="left:-3px;top:132px;">16</div><div class="code" style="left:118.9px;top:132px"><span class="p">}</span><span class="y">)</span></div><div class="ln" style="left:-3px;top:164px;">17</div><div class="code" style="left:101.3px;top:164px"><span class="b">}</span>,</div><div class="ln" style="left:-3px;top:196px;">18</div><div class="ln" style="left:-3px;top:228px;">19</div><svg width="10" height="6" style="left:65px;top:234px" viewBox="0 0 10 6" fill="none" stroke="#c5c5c5" stroke-width="1.200"><path d="M0.800 0.800l4.200 4 4.200-4"/></svg><div class="code" style="left:101.3px;top:228px"><span class="fn">btnTap2</span><span class="b">(</span><span class="num">e</span><span class="b">){</span></div><div class="ln" style="left:-3px;top:260px;">20</div><div class="code" style="left:118.9px;top:260px">console.<span class="fn">log</span><span class="y">(</span>e<span class="y">)</span></div><div class="ln" style="left:-3px;top:292px;">21</div><div class="code" style="left:101.3px;top:292px"><span class="b">}</span>,</div><div class="ln" style="left:-3px;top:324px;">22</div><div class="ln" style="left:-3px;top:356px;">23</div><div class="code" style="left:101.3px;top:356px"><span class="cm">//input<span class="cj">输入框的事件处理函数</span></span></div><div class="ln" style="left:-3px;top:388px;">24</div><svg width="10" height="6" style="left:65px;top:394px" viewBox="0 0 10 6" fill="none" stroke="#c5c5c5" stroke-width="1.200"><path d="M0.800 0.800l4.200 4 4.200-4"/></svg><div class="code" style="left:101.3px;top:388px"><span class="fn">inputHandler</span><span class="b">(</span><span class="num">e</span><span class="b">){</span></div><div class="ln" style="left:-3px;top:420px;">25</div><div class="code" style="left:118.9px;top:420px">console.<span class="fn">log</span><span class="y">(</span>e.detail.value<span class="y">)</span></div><div class="ln" style="left:-3px;top:452px;">26</div><div class="code" style="left:101.3px;top:452px"><span class="b">}</span>,</div><div class="ln" style="left:-3px;top:484px;color:#c6c6c6">27</div><div class="ln" style="left:-3px;top:516px;">28</div><svg width="10" height="6" style="left:65px;top:522px" viewBox="0 0 10 6" fill="none" stroke="#c5c5c5" stroke-width="1.200"><path d="M0.800 0.800l4.200 4 4.200-4"/></svg><div class="code" style="left:101.3px;top:516px"><span class="cm">/**</span></div><div class="ln" style="left:-3px;top:548px;">29</div><div class="code" style="left:101.3px;top:548px"><span class="cm"> * <span class="cj">生命周期函数</span>--<span class="cj">监听页面加载</span></span></div><div class="ln" style="left:-3px;top:580px;">30</div><div class="code" style="left:101.3px;top:580px"><span class="cm"> */</span></div></div><div class="tabbar"><div class="tab act" style="left:0;width:119px"><svg width="12" height="12" style="left:11px;top:9px" viewBox="0 0 13 13"><rect width="13" height="13" rx="1" fill="#f5c518"/><text x="4.300" y="11.500" font-family="Liberation Sans,sans-serif" font-size="7" font-weight="700" fill="#4a3800">JS</text></svg><span class="n" style="left:31px">text1.js</span><svg width="10" height="10" style="left:97px;top:10px" viewBox="0 0 10 10" stroke="#e8e8e8" stroke-width="1.300"><path d="M0.800 0.800l8.400 8.400M9.200 0.800l-8.400 8.400"/></svg></div><svg width="12" height="12" style="left:526px;top:9px" viewBox="0 0 12 12" fill="none" stroke="#d0d0d0" stroke-width="1.200"><rect x="0.600" y="0.600" width="10.800" height="10.800"/><path d="M6 0.600v10.800"/></svg><span class="t" style="left:556px;top:7px;font-size:14px;font-weight:700;color:#ccc;letter-spacing:.2px">···</span></div><div class="bc"><svg width="16" height="12" style="left:6px;top:5px" viewBox="0 0 16 12" fill="none" stroke="#b0b0b0" stroke-width="1.100"><path d="M3.500 1.500h12M3.500 4.500h12M3.500 7.500h12M3.500 10.500h12M0 1.500h1.800M0 4.500h1.800M0 7.500h1.800M0 10.500h1.800"/></svg><svg width="11" height="14" style="left:38px;top:4px" viewBox="0 0 11 14" fill="none" stroke="#b0b0b0" stroke-width="1.200"><path d="M1 0.800h9v12l-4.500-3.800-4.500 3.800z"/></svg><svg width="13" height="10" style="left:68px;top:6px" viewBox="0 0 13 10" fill="none" stroke="#b0b0b0" stroke-width="1.200"><path d="M12.500 5h-11.500M5.500 0.800l-4.300 4.200 4.300 4.200"/></svg><svg width="13" height="10" style="left:96px;top:6px" viewBox="0 0 13 10" fill="none" stroke="#5c5c5c" stroke-width="1.200"><path d="M0.500 5h11.500M7.500 0.800l4.300 4.200-4.300 4.200"/></svg><span class="n" style="left:125px">pages</span><svg width="7" height="10" style="left:165px;top:6px" viewBox="0 0 7 10" fill="none" stroke="#9a9a9a" stroke-width="1.100"><path d="M1 0.800l4.500 4.200-4.500 4.200"/></svg><span class="n" style="left:175px">tetx1</span><svg width="7" height="10" style="left:209px;top:6px" viewBox="0 0 7 10" fill="none" stroke="#9a9a9a" stroke-width="1.100"><path d="M1 0.800l4.500 4.200-4.500 4.200"/></svg><svg width="12" height="12" style="left:222px;top:5px" viewBox="0 0 13 13"><rect width="13" height="13" rx="1" fill="#f5c518"/><text x="4.300" y="11.500" font-family="Liberation Sans,sans-serif" font-size="7" font-weight="700" fill="#4a3800">JS</text></svg><span class="n" style="left:242px;color:#c8c8c8">text1.js</span><svg width="7" height="10" style="left:287px;top:6px" viewBox="0 0 7 10" fill="none" stroke="#9a9a9a" stroke-width="1.100"><path d="M1 0.800l4.500 4.200-4.500 4.200"/></svg><span class="n" style="left:298px">...</span></div><div class="abs" style="left:576px;top:52px;width:1px;height:556px;background:#454545"></div><div class="abs" style="left:577px;top:195px;width:14px;height:2px;background:#8a8a8a"></div><div class="abs" style="left:82px;top:356px;width:288px;height:132px;border:3px solid #f03a3a"></div></div>
<div class="abs" style="left:737px;top:699px;width:1183px;height:1px;background:#4a4a4a;z-index:3"></div><div id="dbg" class="abs"><div class="abs" style="left:0;top:0;width:1183px;height:29px;background:#333"></div><span class="n" style="left:20px;top:9px;font-size:11px;line-height:12px;color:#e8e8e8">调试器</span><span class="n" style="left:72px;top:9px;font-size:11px;line-height:12px;color:#9a9a9a">问题</span><span class="n" style="left:114px;top:9px;font-size:11px;line-height:12px;color:#9a9a9a">输出</span><span class="n" style="left:156px;top:9px;font-size:11px;line-height:12px;color:#9a9a9a">终端</span><span class="n" style="left:198px;top:9px;font-size:11px;line-height:12px;color:#9a9a9a">代码质量</span><div class="abs" style="left:20px;top:28px;width:33px;height:1px;background:#e8e8e8"></div><svg width="12" height="7" style="left:1117px;top:13px" viewBox="0 0 12 7" fill="none" stroke="#d8d8d8" stroke-width="1.200"><path d="M1 6l5-5 5 5"/></svg><svg width="10" height="10" style="left:1151px;top:12px" viewBox="0 0 10 10" fill="none" stroke="#d8d8d8" stroke-width="1.200"><path d="M0.800 0.800l8.400 8.400M9.200 0.800l-8.400 8.400"/></svg><div class="abs" style="left:0;top:29px;width:1183px;height:27px;background:#292a2d;border-bottom:1px solid #414245"></div><svg width="16" height="16" style="left:8px;top:35px" viewBox="0 0 16 16" fill="none" stroke="#8e8e8e" stroke-width="1.200"><path d="M6 12.500h-4.500v-11h11v4.500" stroke-dasharray="0"/><path d="M7 6.500l7.500 3-3.200 1.200 2.700 3-1.200 1-2.600-3-1.800 2.800z" fill="#8e8e8e" stroke="none"/></svg><div class="abs" style="left:34px;top:34px;width:1px;height:17px;background:#4a4a4a"></div><div class="abs" style="left:95px;top:29px;width:66px;height:26px;background:#000"></div><span class="n" style="left:53px;top:36px;font-size:12px;line-height:14px;color:#e0e0e0">Wxml</span><span class="n" style="left:106.5px;top:36px;font-size:12px;line-height:14px;color:#fff">Console</span><span class="n" style="left:172.5px;top:36px;font-size:12px;line-height:14px;color:#e0e0e0">Sources</span><span class="n" style="left:237.5px;top:36px;font-size:12px;line-height:14px;color:#e0e0e0">Network</span><span class="n" style="left:306.5px;top:36px;font-size:12px;line-height:14px;color:#e0e0e0">Performance</span><span class="n" style="left:396.5px;top:36px;font-size:12px;line-height:14px;color:#e0e0e0">Memory</span><span class="n" style="left:464.5px;top:36px;font-size:12px;line-height:14px;color:#e0e0e0">AppData</span><span class="n" style="left:534.5px;top:36px;font-size:12px;line-height:14px;color:#e0e0e0">Storage</span><span class="n" style="left:598px;top:36px;font-size:12px;line-height:14px;color:#e0e0e0">Security</span><span class="n" style="left:673px;top:36px;font-size:12px;line-height:14px;color:#e0e0e0">Sensor</span><span class="n" style="left:732.5px;top:36px;font-size:12px;line-height:14px;color:#e0e0e0">Mock</span><span class="n" style="left:785px;top:36px;font-size:12px;line-height:14px;color:#e0e0e0">Audits</span><span class="n" style="left:842.5px;top:36px;font-size:12px;line-height:14px;color:#e0e0e0">Vulnerability</span><svg width="16" height="16" style="left:1102px;top:34px" viewBox="0 0 16 16"><path d="M13.300 8.700c0-.2.100-.5.100-.7s0-.5-.100-.7l1.500-1.200c.1-.1.200-.3.100-.5l-1.400-2.400c-.1-.2-.3-.2-.5-.2l-1.800.7c-.4-.3-.8-.5-1.200-.7l-.3-1.900c0-.2-.2-.3-.4-.3h-2.800c-.2 0-.3.100-.4.300l-.3 1.900c-.4.200-.8.400-1.200.7l-1.800-.7c-.2-.1-.4 0-.5.200l-1.400 2.400c-.1.200-.1.400.1.500l1.500 1.200c0 .2-.1.500-.1.700s0 .5.100.7l-1.500 1.200c-.1.100-.2.300-.1.500l1.400 2.400c.1.200.3.200.5.200l1.800-.7c.4.300.8.500 1.200.7l.3 1.900c0 .2.200.3.400.3h2.800c.2 0 .3-.1.400-.3l.3-1.900c.4-.2.800-.4 1.200-.7l1.800.7c.2.100.4 0 .5-.2l1.400-2.400c.1-.2.100-.4-.1-.5zm-5.300 1.800c-1.400 0-2.500-1.100-2.500-2.500s1.100-2.500 2.500-2.500 2.500 1.100 2.500 2.500-1.100 2.500-2.500 2.500z" fill="#8e8e8e"/></svg><div class="abs" style="left:1091px;top:34px;width:1px;height:17px;background:#4a4a4a"></div><svg width="4" height="14" style="left:1136px;top:35px" viewBox="0 0 4 14" fill="#8e8e8e"><circle cx="2" cy="2" r="1.500"/><circle cx="2" cy="7" r="1.500"/><circle cx="2" cy="12" r="1.500"/></svg><svg width="16" height="14" style="left:1158px;top:35px" viewBox="0 0 16 14" fill="none" stroke="#8e8e8e" stroke-width="1.600"><path d="M4 9.500v-8.500h11v8.500z"/><path d="M1 4.500v8.500h11" /></svg><div class="abs" style="left:0;top:56px;width:1183px;height:27px;background:#292a2d;border-bottom:1px solid #47484b"></div><svg width="15" height="13" style="left:8px;top:63px" viewBox="0 0 15 13" fill="none" stroke="#8e8e8e" stroke-width="1.200"><rect x="0.600" y="0.600" width="13.800" height="11.800"/><path d="M4.500 0.600v11.800"/><path d="M7.500 3.800l3.500 2.700-3.500 2.700z" fill="#8e8e8e" stroke="none"/></svg><svg width="14" height="14" style="left:38px;top:62px" viewBox="0 0 14 14" fill="none" stroke="#8e8e8e" stroke-width="1.600"><circle cx="7" cy="7" r="5.800"/><path d="M3 3l8 8"/></svg><div class="abs" style="left:62px;top:61px;width:1px;height:17px;background:#4a4a4a"></div><span class="n" style="left:72px;top:63px;font-size:12px;line-height:14px;color:#e0e0e0">appservice (#9)</span><svg width="8" height="7" style="left:192px;top:65px" viewBox="0 0 8 7"><path d="M0.300 0.500h7.400l-3.700 6z" fill="#8e8e8e"/></svg><div class="abs" style="left:210px;top:61px;width:1px;height:17px;background:#4a4a4a"></div><svg width="18" height="12" style="left:219px;top:63px" viewBox="0 0 18 12"><path d="M9 0.500c-4 0-7 3-8.500 5.500 1.500 2.500 4.500 5.500 8.500 5.500s7-3 8.500-5.500c-1.500-2.500-4.500-5.500-8.500-5.500z" fill="#8e8e8e"/><circle cx="9" cy="6" r="3.300" fill="#292a2d"/><circle cx="9" cy="6" r="1.700" fill="#8e8e8e"/></svg><div class="abs" style="left:247px;top:61px;width:1px;height:17px;background:#4a4a4a"></div><div class="abs" style="left:253px;top:59px;width:254px;height:21px;background:#242424;border:1px solid #4a4a4a"></div><span class="n" style="left:259px;top:64px;font-size:12px;line-height:14px;color:#e0e0e0">Filter</span><span class="n" style="left:517px;top:63px;font-size:12px;line-height:14px;color:#e0e0e0">Default levels</span><svg width="8" height="7" style="left:591px;top:65px" viewBox="0 0 8 7"><path d="M0.300 0.500h7.400l-3.700 6z" fill="#8e8e8e"/></svg><div class="abs" style="left:1148px;top:61px;width:1px;height:17px;background:#4a4a4a"></div><svg width="16" height="16" style="left:1158px;top:61px" viewBox="0 0 16 16"><path d="M13.300 8.700c0-.2.100-.5.100-.7s0-.5-.100-.7l1.500-1.200c.1-.1.200-.3.100-.5l-1.400-2.400c-.1-.2-.3-.2-.5-.2l-1.800.7c-.4-.3-.8-.5-1.200-.7l-.3-1.900c0-.2-.2-.3-.4-.3h-2.800c-.2 0-.3.100-.4.300l-.3 1.900c-.4.200-.8.400-1.200.7l-1.800-.7c-.2-.1-.4 0-.5.200l-1.400 2.400c-.1.200-.1.400.1.500l1.500 1.200c0 .2-.1.500-.1.700s0 .5.100.7l-1.500 1.200c-.1.100-.2.300-.1.500l1.400 2.400c.1.200.3.200.5.200l1.800-.7c.4.300.8.500 1.200.7l.3 1.900c0 .2.200.3.400.3h2.800c.2 0 .3-.1.400-.3l.3-1.900c.4-.2.800-.4 1.200-.7l1.800.7c.2.100.4 0 .5-.2l1.400-2.400c.1-.2.100-.4-.1-.5zm-5.300 1.800c-1.400 0-2.500-1.100-2.500-2.500s1.100-2.500 2.500-2.500 2.500 1.100 2.500 2.500-1.100 2.500-2.500 2.500z" fill="#8e8e8e"/></svg><div class="crow" style="top:84px"><span class="m">s</span><span class="s">text1.js? [sm]:25</span></div><div class="crow" style="top:104px"><span class="m">sd</span><span class="s">text1.js? [sm]:25</span></div><div class="crow" style="top:124px"><span class="m">sda</span><span class="s">text1.js? [sm]:25</span></div><div class="crow" style="top:144px"><span class="m">sdak</span><span class="s">text1.js? [sm]:25</span></div><div class="crow" style="top:164px"><span class="m">sdaks</span><span class="s">text1.js? [sm]:25</span></div><div class="crow" style="top:184px"><span class="m">sdaksj</span><span class="s">text1.js? [sm]:25</span></div><div class="crow" style="top:204px"><span class="m">sdaksjd</span><span class="s">text1.js? [sm]:25</span></div><div class="crow" style="top:224px"><span class="m">sdaksjdh</span><span class="s">text1.js? [sm]:25</span></div><svg width="7" height="9" style="left:8px;top:249px" viewBox="0 0 7 9" fill="none" stroke="#3b82f6" stroke-width="1.500"><path d="M1 1l4.500 3.500-4.500 3.500"/></svg><div class="abs" style="left:1173px;top:8px;width:11px;height:58px;background:#2a303b;border-radius:3px 0 0 3px;border:1px solid #3b4352;box-shadow:-1px 0 2px rgba(0,0,0,.5)"></div><div class="abs" style="left:1177px;top:14px;width:5px;height:36px;background:repeating-linear-gradient(#1b1f27 0 1px,transparent 1px 2px)"></div><div class="abs" style="left:1177px;top:51px;width:5px;height:10px;background:repeating-linear-gradient(#3ed0a2 0 1px,transparent 1px 2px)"></div><span class="n" style="left:135px;top:137px;font-size:16px;line-height:22px;color:#e53a30">文本框中输入的数据会输入到终端中</span><div class="abs" style="left:5px;top:83px;width:103px;height:173px;border:3px solid #f03a3a"></div><span class="n" style="left:1073px;top:282px;font-family:'DejaVu Serif','Liberation Serif',serif;font-weight:400;-webkit-text-stroke:.3px;letter-spacing:1.150px;font-size:16px;line-height:22px;color:#ff1424">Yuucn.com</span></div>
<div id="status" class="abs"><svg width="12" height="12" style="left:14px;top:9px" viewBox="0 0 12 12" fill="none" stroke="#b0b0b0" stroke-width="1"><circle cx="6" cy="6" r="5.300"/><path d="M3.800 3.800l4.400 4.400M8.200 3.800l-4.400 4.400"/></svg><span class="st" style="left:30px;top:9px;color:#bbb">0</span><svg width="12" height="12" style="left:41px;top:9px" viewBox="0 0 12 12" fill="none" stroke="#b0b0b0" stroke-width="1"><path d="M6 1l5.300 10h-10.600z"/><path d="M6 4.500v3.500M6 9v1"/></svg><span class="st" style="left:57px;top:9px;color:#bbb">0</span><span class="st" style="left:1170px;top:9px;font-size:12px;color:#858585">行 27, 列 2</span><span class="st" style="left:1252px;top:9px;font-size:12px;color:#858585">空格: 2</span><span class="st" style="left:1300px;top:9px;font-size:12px;color:#858585">UTF-8</span><span class="st" style="left:1343px;top:9px;font-size:12px;color:#858585">LF</span><span class="st" style="left:1372px;top:9px;font-size:12px;color:#858585">JavaScript</span><span class="st" style="left:1189px;top:7px;font-size:19.200px;font-weight:300;font-family:'Noto Sans CJK SC','Liberation Sans',sans-serif;letter-spacing:.5px;line-height:20px;color:#f0f0f0;text-shadow:1px 1px 1px #1a1a1a,0 0 2px #222">CSDN @白天数糖晚上数羊</span></div>
<div id="taskbar" class="abs"><div class="abs" style="left:567px;top:0;width:160px;height:7px;background:#4a4a4a"></div><div class="abs" style="left:1915px;top:0;width:1px;height:7px;background:#5a5a5a"></div><span class="t" style="left:1818px;top:4px;font-size:12px;color:#fff">13:22</span></div>
</body>
</html>
